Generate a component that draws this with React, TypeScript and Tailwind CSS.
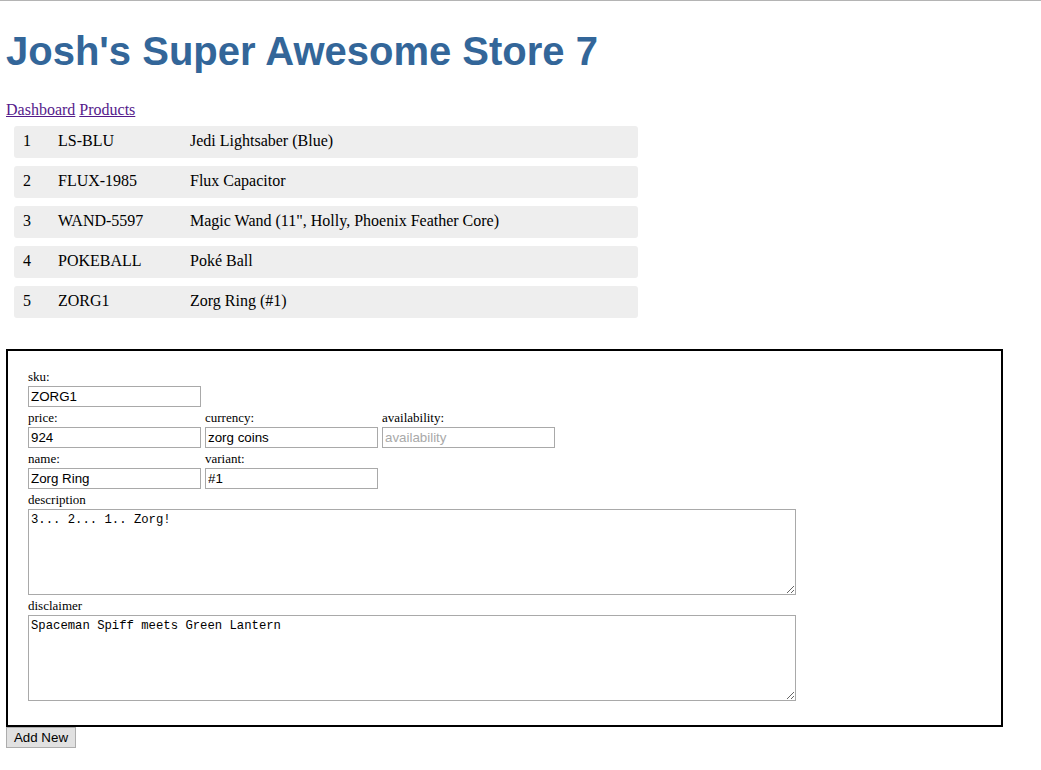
import type { FC } from "react";

type Product = {
    id: number;
    sku: string;
    name: string;
};

const products: Product[] = [
    { id: 1, sku: "LS-BLU", name: "Jedi Lightsaber (Blue)" },
    { id: 2, sku: "FLUX-1985", name: "Flux Capacitor" },
    { id: 3, sku: "WAND-5597", name: 'Magic Wand (11", Holly, Phoenix Feather Core)' },
    { id: 4, sku: "POKEBALL", name: "Poké Ball" },
    { id: 5, sku: "ZORG1", name: "Zorg Ring (#1)" },
];

const inputCls =
    "block w-[173px] h-[21px] border border-[#a9a9a9] bg-white px-[2px] py-[1px] text-[13.33px] text-black font-['Liberation_Sans',Arial,sans-serif] outline-none placeholder:text-[#a9a9a9]";

type FieldProps = {
    label: string;
    value?: string;
    placeholder?: string;
};
const Field: FC<FieldProps> = ({ label, value, placeholder }) => {
    return (
        <div className="w-[173px]">
            <div className="h-[17px] text-[13px] leading-[15px]">{label}</div>
            <input className={inputCls} defaultValue={value} placeholder={placeholder} />
        </div>
    );
};

type AreaProps = {
    label: string;
    value: string;
};
const Area: FC<AreaProps> = ({ label, value }) => {
    return (
        <div>
            <div className="h-[17px] text-[13px] leading-[15px]">{label}</div>
            <textarea
                className="block w-[768px] h-[86px] border border-[#a9a9a9] bg-white px-[2px] pt-[3px] pb-[2px] text-[12.25px] leading-[15px] text-black font-['Liberation_Mono',monospace] outline-none resize"
                defaultValue={value}
                spellCheck={false}
            />
        </div>
    );
};

export default function App() {
    return (
        <div className="min-h-[770px] bg-white border-t border-[#b4b4b4] pl-[6px] font-['Liberation_Serif','Times_New_Roman',serif] text-[16px] text-black">
            <h1 className="mt-[27px] mb-[27px] text-[40px] leading-[46px] font-bold text-[#336699] font-['Liberation_Sans',Arial,sans-serif]">
                Josh's Super Awesome Store 7
            </h1>

            <nav className="leading-[18px] flex gap-[4px]">
                <a href="#" className="text-[#551a8b] underline">Dashboard</a>
                <a href="#" className="text-[#551a8b] underline">Products</a>
            </nav>

            <div className="mt-[7px] ml-[8px] flex flex-col gap-[8px] w-[624px]">
                {products.map((p) => (
                    <div key={p.id} className="h-[32px] flex items-center pl-[9px] pb-[2px] bg-[#eeeeee] rounded-[3px] leading-[18px]">
                        <span className="w-[35px]">{p.id}</span>
                        <span className="w-[132px]">{p.sku}</span>
                        <span>{p.name}</span>
                    </div>
                ))}
            </div>

            <form className="mt-[31px] w-[997px] border-2 border-black pt-[18px] pl-[20px] pb-[24px] flex flex-col gap-[3px]">
                <div className="flex gap-[4px]">
                    <Field label="sku:" value="ZORG1" />
                </div>
                <div className="flex gap-[4px]">
                    <Field label="price:" value="924" />
                    <Field label="currency:" value="zorg coins" />
                    <Field label="availability:" placeholder="availability" />
                </div>
                <div className="flex gap-[4px]">
                    <Field label="name:" value="Zorg Ring" />
                    <Field label="variant:" value="#1" />
                </div>
                <Area label="description" value="3... 2... 1.. Zorg!" />
                <Area label="disclaimer" value="Spaceman Spiff meets Green Lantern" />
            </form>

            <button
                type="button"
                className="block w-[70px] h-[21px] border border-[#adadad] bg-[#e1e1e1] text-[13.33px] text-black font-['Liberation_Sans',Arial,sans-serif] leading-none"
            >
                Add New
            </button>
        </div>
    );
}
